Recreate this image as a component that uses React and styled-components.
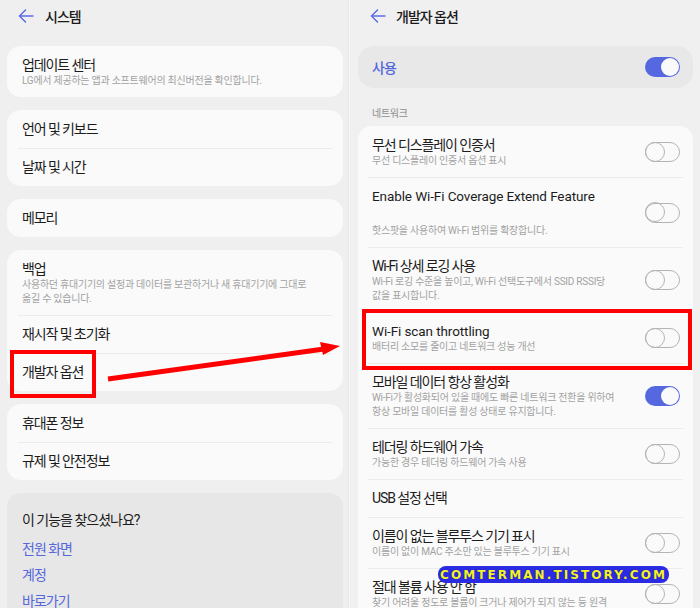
import { createGlobalStyle, styled, css } from "styled-components";

const GlobalStyle = createGlobalStyle`
  html, body {
    margin: 0;
    padding: 0;
    background: #efefef;
  }
  body {
    font-family: Roboto, "Noto Sans CJK KR", sans-serif;
    color: #1c1c1c;
  }
  * {
    box-sizing: border-box;
  }
`;

const Screen = styled.div`
  position: relative;
  display: flex;
  width: 700px;
  height: 608px;
  overflow: hidden;
  background: #efefef;
`;

const Panel = styled.section`
  display: flex;
  flex-direction: column;
  width: ${(p) => (p.$side === "left" ? "348px" : "350px")};
  padding: ${(p) => (p.$side === "left" ? "0 5px 0 7px" : "0 7px 0 8px")};
  background: ${(p) => (p.$side === "left" ? "#efefef" : "#f0f0f0")};

  & > * {
    flex-shrink: 0;
  }
`;

const Split = styled.div`
  width: 2px;
  background: #f7f7f7;
  border-left: 1px solid #e7e7e7;
`;

const Header = styled.header`
  display: flex;
  align-items: center;
  gap: ${(p) => (p.$side === "left" ? "11px" : "10px")};
  height: 32px;
  padding-left: ${(p) => (p.$side === "left" ? "11px" : "12px")};
`;

const HeaderTitle = styled.h1`
  margin: 0;
  font-size: 14px;
  font-weight: 500;
  letter-spacing: -1px;
  color: #1a1a1a;
`;

const Stack = styled.div`
  display: flex;
  flex-direction: column;
  gap: 13px;
  margin-top: 14px;

  & > * {
    flex-shrink: 0;
  }
`;

const Card = styled.div`
  background: ${(p) => (p.$muted ? "#e7e7e7" : "#fafafa")};
  border-radius: 14px;
  padding: ${(p) => (p.$muted ? "18px 15px 10px" : "0 11px")};
`;

const Row = styled.div`
  display: flex;
  align-items: center;
  justify-content: space-between;
  gap: 12px;
  padding: 10px ${(p) => (p.$toggle ? "3px" : "4px")} ${(p) => (p.$single ? "10px" : "9px")} 4px;

  & + & {
    border-top: 1px solid #ebebeb;
    padding-top: 9px;
  }
`;

const Texts = styled.div`
  display: flex;
  flex-direction: column;
  min-width: 0;
`;

const Title = styled.div`
  font-size: ${(p) => (p.$latin ? "13.5px" : "14px")};
  line-height: 18px;
  letter-spacing: ${(p) => (p.$latin ? "-0.1px" : "-1.1px")};
  color: #1c1c1c;
  white-space: nowrap;
  margin-bottom: ${(p) => (p.$gap ? "19px" : "0")};
`;

const Sub = styled.div`
  font-size: 10px;
  line-height: 14px;
  letter-spacing: -0.25px;
  color: #a2a2a2;
  white-space: nowrap;
`;

const EnableCard = styled.div`
  display: flex;
  align-items: center;
  justify-content: space-between;
  height: 42px;
  margin-top: 14px;
  padding: 0 13px 0 14px;
  border-radius: 16px;
  background: #e8e8e8;
`;

const EnableLabel = styled.span`
  font-size: 14px;
  font-weight: 500;
  letter-spacing: -1px;
  color: #5266dc;
`;

const SectionLabel = styled.div`
  margin: 19px 0 5px;
  padding-left: 14px;
  font-size: 10px;
  line-height: 14px;
  letter-spacing: -0.3px;
  color: #8d8d8d;
`;

const RightCard = styled(Card)`
  padding: 0 10px;
`;

const SuggestTitle = styled.div`
  font-size: 14px;
  line-height: 18px;
  letter-spacing: -1px;
  color: #1c1c1c;
  margin-bottom: 7px;
`;

const SuggestLink = styled.div`
  font-size: 14px;
  line-height: 26px;
  letter-spacing: -1px;
  color: #5568dc;
`;

const Toggle = styled.span`
  position: relative;
  flex: none;
  width: 35px;
  height: 20px;
  border-radius: 10px;
  ${(p) =>
    p.$on
      ? css`
          background: #5568e0;
        `
      : css`
          border: 1.5px solid #b4b4b4;
        `}

  &::after {
    content: "";
    position: absolute;
    top: ${(p) => (p.$on ? "1px" : "-1.5px")};
    left: ${(p) => (p.$on ? "16px" : "-1.5px")};
    width: ${(p) => (p.$on ? "18px" : "20px")};
    height: ${(p) => (p.$on ? "18px" : "20px")};
    border-radius: 50%;
    box-sizing: border-box;
    ${(p) =>
      p.$on
        ? css`
            background: #fafafa;
          `
        : css`
            border: 1.5px solid #b4b4b4;
          `}
  }
`;

const Highlight = styled.div`
  position: absolute;
  left: ${(p) => p.$x}px;
  top: ${(p) => p.$y}px;
  width: ${(p) => p.$w}px;
  height: ${(p) => p.$h}px;
  border: 4px solid #ff0000;
  pointer-events: none;
`;

const ArrowLayer = styled.svg`
  position: absolute;
  left: 0;
  top: 0;
  pointer-events: none;
`;

const Watermark = styled.div`
  position: absolute;
  left: 438px;
  top: 566px;
  width: 231px;
  height: 17px;
  display: flex;
  align-items: center;
  justify-content: center;
  border-radius: 8px;
  background: #2b2be4;
  color: #f2f22a;
  font-family: "DejaVu Sans", sans-serif;
  font-size: 12px;
  font-weight: 700;
  letter-spacing: 2.1px;
  text-shadow: 0 0 1px #10106a;
`;

function BackArrow() {
  return (
    <svg width="16" height="14" viewBox="0 0 16 14" fill="none">
      <path
        d="M15 7H1.5M7.5 1L1.5 7l6 6"
        stroke="#5a6ee6"
        strokeWidth="1.5"
        strokeLinecap="round"
        strokeLinejoin="round"
      />
    </svg>
  );
}

function Item({ title, sub, latin, gap, toggle, on }) {
  const lines = sub ? [].concat(sub) : [];
  return (
    <Row $single={!sub} $toggle={toggle}>
      <Texts>
        <Title $latin={latin} $gap={gap}>
          {title}
        </Title>
        {lines.map((line) => (
          <Sub key={line}>{line}</Sub>
        ))}
      </Texts>
      {toggle && <Toggle $on={on} />}
    </Row>
  );
}

const devItems = [
  { title: "무선 디스플레이 인증서", sub: "무선 디스플레이 인증서 옵션 표시", toggle: true },
  {
    title: "Enable Wi-Fi Coverage Extend Feature",
    sub: "핫스팟을 사용하여 Wi-Fi 범위를 확장합니다.",
    latin: true,
    gap: true,
    toggle: true,
  },
  {
    title: "Wi-Fi 상세 로깅 사용",
    sub: ["Wi-Fi 로깅 수준을 높이고, Wi-Fi 선택도구에서 SSID RSSI당", "값을 표시합니다."],
    toggle: true,
  },
  {
    title: "Wi-Fi scan throttling",
    sub: "배터리 소모를 줄이고 네트워크 성능 개선",
    latin: true,
    toggle: true,
  },
  {
    title: "모바일 데이터 항상 활성화",
    sub: [
      "Wi-Fi가 활성화되어 있을 때에도 빠른 네트워크 전환을 위하여",
      "항상 모바일 데이터를 활성 상태로 유지합니다.",
    ],
    toggle: true,
    on: true,
  },
  { title: "테더링 하드웨어 가속", sub: "가능한 경우 테더링 하드웨어 가속 사용", toggle: true },
  { title: "USB 설정 선택" },
  {
    title: "이름이 없는 블루투스 기기 표시",
    sub: "이름이 없이 MAC 주소만 있는 블루투스 기기 표시",
    toggle: true,
  },
  {
    title: "절대 볼륨 사용 안 함",
    sub: "찾기 어려울 정도로 볼륨이 크거나 제어가 되지 않는 등 원격",
    toggle: true,
  },
];

export default function App() {
  return (
    <>
      <GlobalStyle />
      <Screen>
        <Panel $side="left">
          <Header $side="left">
            <BackArrow />
            <HeaderTitle>시스템</HeaderTitle>
          </Header>
          <Stack>
            <Card>
              <Item title="업데이트 센터" sub="LG에서 제공하는 앱과 소프트웨어의 최신버전을 확인합니다." />
            </Card>
            <Card>
              <Item title="언어 및 키보드" />
              <Item title="날짜 및 시간" />
            </Card>
            <Card>
              <Item title="메모리" />
            </Card>
            <Card>
              <Item
                title="백업"
                sub={["사용하던 휴대기기의 설정과 데이터를 보관하거나 새 휴대기기에 그대로", "옮길 수 있습니다."]}
              />
              <Item title="재시작 및 초기화" />
              <Item title="개발자 옵션" />
            </Card>
            <Card>
              <Item title="휴대폰 정보" />
              <Item title="규제 및 안전정보" />
            </Card>
            <Card $muted>
              <SuggestTitle>이 기능을 찾으셨나요?</SuggestTitle>
              <SuggestLink>전원 화면</SuggestLink>
              <SuggestLink>계정</SuggestLink>
              <SuggestLink>바로가기</SuggestLink>
            </Card>
          </Stack>
        </Panel>
        <Split />
        <Panel $side="right">
          <Header $side="right">
            <BackArrow />
            <HeaderTitle>개발자 옵션</HeaderTitle>
          </Header>
          <EnableCard>
            <EnableLabel>사용</EnableLabel>
            <Toggle $on />
          </EnableCard>
          <SectionLabel>네트워크</SectionLabel>
          <RightCard>
            {devItems.map((item) => (
              <Item key={item.title} {...item} />
            ))}
          </RightCard>
        </Panel>

        <Highlight $x={10} $y={350} $w={86} $h={48} />
        <Highlight $x={362} $y={309} $w={330} $h={61} />
        <ArrowLayer width="700" height="608" viewBox="0 0 700 608">
          <path d="M108 379L324 349" stroke="#ff0000" strokeWidth="5" strokeLinecap="butt" />
          <path d="M340 346L320 342L323 355Z" fill="#ff0000" />
        </ArrowLayer>
        <Watermark>COMTERMAN.TISTORY.COM</Watermark>
      </Screen>
    </>
  );
}
